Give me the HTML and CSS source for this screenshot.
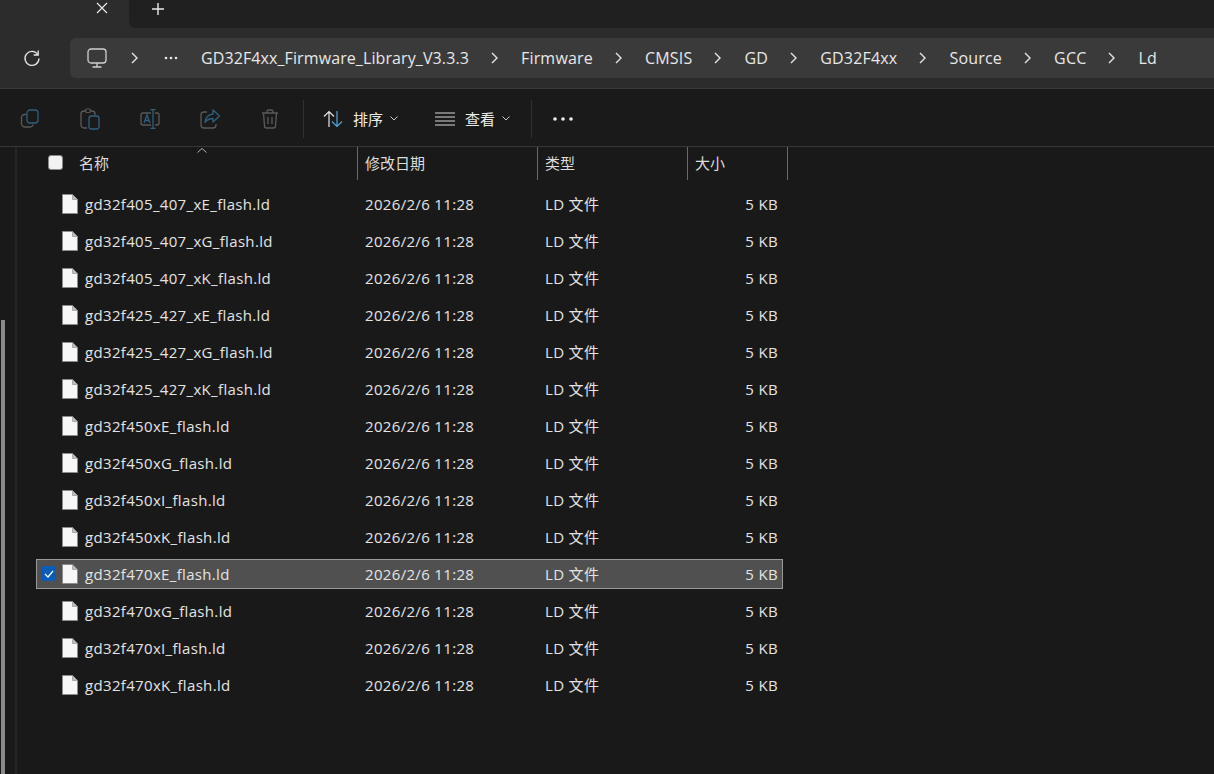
FILE: index.html
```html
<!DOCTYPE html>
<html lang="zh">
<head>
<meta charset="utf-8">
<title>Ld</title>
<link rel="stylesheet" href="styles.css">
</head>
<body>
<svg class="defs" width="0" height="0" aria-hidden="true">
  <symbol id="file" viewBox="0 0 16 20"><path d="M.5.5h10l5 5v14H.5z" fill="#f7f7f7" stroke="#8c8c8c"/><path d="M10.5.5v5h5z" fill="#bdbdbd" stroke="#8c8c8c" stroke-width=".6"/></symbol>
  <symbol id="chev" viewBox="0 0 8 12"><path d="M1 1l5 5-5 5" fill="none" stroke="#e6e6e6" stroke-width="1.4"/></symbol>
  <symbol id="down" viewBox="0 0 8 5"><path d="M.5.5L4 4 7.500.5" fill="none" stroke="#c8c8c8" stroke-width="1"/></symbol>
</svg>
<div class="tabstrip">
  <div class="tab">
    <svg class="tab-x" width="12" height="12" viewBox="0 0 12 12"><path d="M1 1l10 10M11 1L1 11" stroke="#e8e8e8" stroke-width="1.200"/></svg>
  </div>
  <div class="tabrest">
    <svg class="tab-plus" width="14" height="14" viewBox="0 0 14 14"><path d="M7 1v12M1 7h12" stroke="#e8e8e8" stroke-width="1.400"/></svg>
  </div>
</div>
<div class="navbar">
  <svg class="refresh" width="18" height="18" viewBox="0 0 18 18"><path d="M14.800 5.500A7 7 0 1 0 16 9.500" fill="none" stroke="#e8e8e8" stroke-width="1.300"/><path d="M15.200 1.500v4.500h-4.500" fill="none" stroke="#e8e8e8" stroke-width="1.300"/></svg>
  <div class="crumbs">
    <svg class="pc" width="20" height="20" viewBox="0 0 20 20"><rect x="1" y="1" width="18" height="14" rx="3" fill="none" stroke="#d0d0d0" stroke-width="1.300"/><path d="M10 15v4M5.500 19h9" stroke="#d0d0d0" stroke-width="1.300"/></svg>
    <svg class="ch" width="8" height="12"><use href="#chev"/></svg>
    <svg class="more" width="14" height="4" viewBox="0 0 14 4"><circle cx="2" cy="2" r="1.300" fill="#e8e8e8"/><circle cx="7" cy="2" r="1.300" fill="#e8e8e8"/><circle cx="12" cy="2" r="1.300" fill="#e8e8e8"/></svg>
    <span class="crumb-long">GD32F4xx_Firmware_Library_V3.3.3</span>
    <svg class="ch" width="8" height="12"><use href="#chev"/></svg>
    <span>Firmware</span>
    <svg class="ch" width="8" height="12"><use href="#chev"/></svg>
    <span>CMSIS</span>
    <svg class="ch" width="8" height="12"><use href="#chev"/></svg>
    <span>GD</span>
    <svg class="ch" width="8" height="12"><use href="#chev"/></svg>
    <span>GD32F4xx</span>
    <svg class="ch" width="8" height="12"><use href="#chev"/></svg>
    <span>Source</span>
    <svg class="ch" width="8" height="12"><use href="#chev"/></svg>
    <span>GCC</span>
    <svg class="ch" width="8" height="12"><use href="#chev"/></svg>
    <span>Ld</span>
  </div>
</div>
<div class="cmdbar">
  <div class="cmdicons">
    <svg width="20" height="20" viewBox="0 0 20 20"><path d="M6 5.500H4.500A3 3 0 0 0 1.500 8.500v6a3.500 3.500 0 0 0 3.500 3.500h5a3 3 0 0 0 3-2.500" fill="none" stroke="#5a5a5a" stroke-width="1.300"/><rect x="7" y="1" width="11" height="13" rx="3" fill="none" stroke="#2f5f7d" stroke-width="1.300"/></svg>
    <svg width="20" height="22" viewBox="0 0 20 22"><path d="M7 20H4a3 3 0 0 1-3-3V6a3 3 0 0 1 3-3h8a3 3 0 0 1 3 3v1" fill="none" stroke="#5a5a5a" stroke-width="1.300"/><rect x="5.500" y="1" width="5" height="3.500" rx="1.500" fill="#1a1a1a" stroke="#5a5a5a" stroke-width="1.200"/><rect x="9" y="8" width="10" height="13" rx="2.500" fill="none" stroke="#2f5f7d" stroke-width="1.300"/></svg>
    <svg width="20" height="20" viewBox="0 0 20 20"><path d="M11 4H3a2 2 0 0 0-2 2v8a2 2 0 0 0 2 2h8M15 4h2a2 2 0 0 1 2 2v8a2 2 0 0 1-2 2h-2" fill="none" stroke="#5a5a5a" stroke-width="1.300"/><path d="M13 0v20M10.500.5h5M10.500 19.500h5M4 14l3-8 3 8M5 11.500h4" fill="none" stroke="#2f5f7d" stroke-width="1.300"/></svg>
    <svg width="20" height="20" viewBox="0 0 20 20"><path d="M7 3H4a3 3 0 0 0-3 3v10a3 3 0 0 0 3 3h9a3 3 0 0 0 3-3v-1" fill="none" stroke="#5a5a5a" stroke-width="1.300"/><path d="M13 1l6.500 6-6.500 6V9.500c-3.500 0-6 1-8 4 .5-4.500 3.500-8 8-8.500z" fill="none" stroke="#2f5f7d" stroke-width="1.300" stroke-linejoin="round"/></svg>
    <svg width="20" height="20" viewBox="-1 0 20 20"><path d="M1 4h16M6 4V2.500A1.500 1.500 0 0 1 7.500 1h3A1.500 1.500 0 0 1 12 2.500V4M2.500 4l1 13a2 2 0 0 0 2 2h7a2 2 0 0 0 2-2l1-13M7 8v7M11 8v7" fill="none" stroke="#5a5a5a" stroke-width="1.300"/></svg>
  </div>
  <i class="cmdsep"></i>
  <button class="cmd cmd-sort">
    <svg width="20" height="18" viewBox="0 0 20 18"><path d="M6 17V1.500M1 6.500l5-5 5 5" fill="none" stroke="#e6e6e6" stroke-width="1.200"/><path d="M14 1v15.500M9 11.500l5 5 5-5" fill="none" stroke="#4aa8de" stroke-width="1.200"/></svg>
    <span>排序</span>
    <svg width="8" height="5"><use href="#down"/></svg>
  </button>
  <button class="cmd cmd-view">
    <svg width="20" height="14" viewBox="0 0 20 14"><path d="M0 1h20M0 5h20M0 9h20M0 13h20" stroke="#d8d8d8" stroke-width="1.100"/></svg>
    <span>查看</span>
    <svg width="8" height="5"><use href="#down"/></svg>
  </button>
  <i class="cmdsep cmdsep-b"></i>
  <svg class="cmdmore" width="20" height="4" viewBox="0 0 20 4"><circle cx="2" cy="2" r="1.800" fill="#f0f0f0"/><circle cx="10" cy="2" r="1.800" fill="#f0f0f0"/><circle cx="18" cy="2" r="1.800" fill="#f0f0f0"/></svg>
</div>
<div class="main">
  <div class="side"><div class="thumb"></div></div>
  <div class="list">
    <div class="head">
      <div class="hcell hname"><span class="box"></span><span>名称</span>
        <svg class="sort" width="10" height="5" viewBox="0 0 10 5"><path d="M.5 4.500L5 .5l4.500 4" fill="none" stroke="#b0b0b0"/></svg>
      </div>
      <div class="hcell">修改日期</div>
      <div class="hcell">类型</div>
      <div class="hcell">大小</div>
      <i class="hend"></i>
    </div>
    <div class="row"><span class="fname"><svg width="16" height="20"><use href="#file"/></svg>gd32f405_407_xE_flash.ld</span><span>2026/2/6 11:28</span><span>LD 文件</span><span class="size">5 KB</span></div>
    <div class="row"><span class="fname"><svg width="16" height="20"><use href="#file"/></svg>gd32f405_407_xG_flash.ld</span><span>2026/2/6 11:28</span><span>LD 文件</span><span class="size">5 KB</span></div>
    <div class="row"><span class="fname"><svg width="16" height="20"><use href="#file"/></svg>gd32f405_407_xK_flash.ld</span><span>2026/2/6 11:28</span><span>LD 文件</span><span class="size">5 KB</span></div>
    <div class="row"><span class="fname"><svg width="16" height="20"><use href="#file"/></svg>gd32f425_427_xE_flash.ld</span><span>2026/2/6 11:28</span><span>LD 文件</span><span class="size">5 KB</span></div>
    <div class="row"><span class="fname"><svg width="16" height="20"><use href="#file"/></svg>gd32f425_427_xG_flash.ld</span><span>2026/2/6 11:28</span><span>LD 文件</span><span class="size">5 KB</span></div>
    <div class="row"><span class="fname"><svg width="16" height="20"><use href="#file"/></svg>gd32f425_427_xK_flash.ld</span><span>2026/2/6 11:28</span><span>LD 文件</span><span class="size">5 KB</span></div>
    <div class="row"><span class="fname"><svg width="16" height="20"><use href="#file"/></svg>gd32f450xE_flash.ld</span><span>2026/2/6 11:28</span><span>LD 文件</span><span class="size">5 KB</span></div>
    <div class="row"><span class="fname"><svg width="16" height="20"><use href="#file"/></svg>gd32f450xG_flash.ld</span><span>2026/2/6 11:28</span><span>LD 文件</span><span class="size">5 KB</span></div>
    <div class="row"><span class="fname"><svg width="16" height="20"><use href="#file"/></svg>gd32f450xI_flash.ld</span><span>2026/2/6 11:28</span><span>LD 文件</span><span class="size">5 KB</span></div>
    <div class="row"><span class="fname"><svg width="16" height="20"><use href="#file"/></svg>gd32f450xK_flash.ld</span><span>2026/2/6 11:28</span><span>LD 文件</span><span class="size">5 KB</span></div>
    <div class="row selected"><span class="check"><svg width="10" height="8" viewBox="0 0 10 8"><path d="M1 4l3 3 5-6" fill="none" stroke="#fff" stroke-width="1.200"/></svg></span><span class="fname"><svg width="16" height="20"><use href="#file"/></svg>gd32f470xE_flash.ld</span><span>2026/2/6 11:28</span><span>LD 文件</span><span class="size">5 KB</span></div>
    <div class="row"><span class="fname"><svg width="16" height="20"><use href="#file"/></svg>gd32f470xG_flash.ld</span><span>2026/2/6 11:28</span><span>LD 文件</span><span class="size">5 KB</span></div>
    <div class="row"><span class="fname"><svg width="16" height="20"><use href="#file"/></svg>gd32f470xI_flash.ld</span><span>2026/2/6 11:28</span><span>LD 文件</span><span class="size">5 KB</span></div>
    <div class="row"><span class="fname"><svg width="16" height="20"><use href="#file"/></svg>gd32f470xK_flash.ld</span><span>2026/2/6 11:28</span><span>LD 文件</span><span class="size">5 KB</span></div>
  </div>
</div>
</body>
</html>
```

FILE: styles.css
```css
* { box-sizing: border-box; }
html, body { margin: 0; height: 100%; }
body {
  width: 1214px;
  height: 774px;
  overflow: hidden;
  background: #191919;
  color: #e6e6e6;
  font-family: "Open Sans", "Noto Sans CJK SC", sans-serif;
  font-size: 15px;
  display: flex;
  flex-direction: column;
}
.defs { position: absolute; }
svg { display: block; flex: none; }

.tabstrip { height: 28px; display: flex; background: #2c2c2c; flex: none; }
.tab { width: 129px; padding: 2px 0 0 96px; }
.tabrest { flex: 1; background: #202020; border-bottom-left-radius: 6px; padding: 2px 0 0 22px; }

.navbar { height: 61px; flex: none; background: #2c2c2c; border-bottom: 1px solid #3a3a3a; display: flex; align-items: center; padding: 0 0 0 23px; }
.refresh { margin-right: 29px; }
.crumbs { flex: 1; height: 40px; background: #3a3a3a; border-radius: 6px 0 0 6px; display: flex; align-items: center; gap: 22px; padding-left: 17px; font-size: 16px; letter-spacing: .2px; color: #e8e8e8; white-space: nowrap; }
.crumb-long { letter-spacing: .1px; }
.pc { margin-right: 2px; }
.more { margin: 0 1px 0 3px; }

.cmdbar { height: 58px; flex: none; background: #1a1a1a; border-bottom: 1px solid #363636; display: flex; align-items: center; padding: 2px 0 0 20px; }
.cmdicons { display: flex; align-items: center; gap: 40px; width: 283px; }
.cmdsep { width: 1px; height: 38px; background: #303030; }
.cmd { background: none; border: 0; padding: 0; margin: 0; display: flex; align-items: center; color: #ececec; font: inherit; font-size: 15px; }
.cmd span { margin: 0 7px 0 10px; }
.cmd-sort { margin-left: 19px; }
.cmd-view { margin-left: 37px; }
.cmdsep-b { margin-left: 21px; }
.cmdmore { margin-left: 21px; }

.main { flex: 1; display: flex; min-height: 0; }
.side { width: 17px; flex: none; border-right: 2px solid #262626; padding: 173px 0 0 1px; }
.thumb { width: 4px; height: 100%; background: #8a8a8a; }

.list { flex: 1; padding-left: 19px; }
.head { display: grid; grid-template-columns: 321px 180px 150px 100px 1px; height: 33px; margin-bottom: 9px; font-size: 15px; color: #dcdcdc; }
.hcell { display: flex; align-items: center; padding: 0 0 2px 8px; border-right: 1px solid #6a6a6a; margin-right: -1px; }
.hcell:first-child { padding-left: 12px; position: relative; }
.hname .box { width: 15px; height: 15px; background: #f2f2f2; border: 1px solid #8a8a8a; border-radius: 3px; margin-right: 16px; }
.sort { position: absolute; left: 161px; top: 1px; }

.row { position: relative; display: grid; grid-template-columns: 321px 180px 150px 96px; align-items: center; width: 747px; height: 30px; margin-bottom: 7px; font-size: 15px; line-height: 20px; letter-spacing: .33px; color: #e4e4e4; }
.row > span { padding-left: 8px; white-space: nowrap; }
.row > .fname { display: flex; align-items: center; gap: 7px; padding-left: 26px; }
.row > .size { padding: 0 5px 0 0; text-align: right; }
.selected { background: #505050; outline: 1px solid #9a9a9a; outline-offset: -1px; }
.row > .check { position: absolute; left: 5px; top: 7px; width: 15px; height: 15px; padding: 0; border-radius: 3px; background: #0a5cb8; display: flex; align-items: center; justify-content: center; }
```
